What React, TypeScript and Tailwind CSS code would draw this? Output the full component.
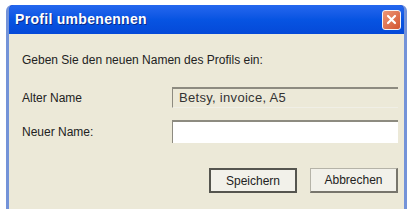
export default function App() {
  return (
    <div className="w-[412px] h-[209px] bg-white pl-[6px] pr-[5px] pt-[5px] overflow-hidden" style={{ fontFamily: '"Liberation Sans", Arial, sans-serif' }}>
      <div className="h-[210px] flex flex-col rounded-t-[6px] bg-[#0a3fd6] border-x-[3px] border-[#7493d8]">
        {/* Titelleiste */}
        <div className="h-[29px] flex items-center justify-between pl-[6px] pr-[3px] bg-gradient-to-b from-[#2467ee] via-[#0754e2] to-[#0549d8] rounded-t-[5px]">
          <span className="text-white font-bold text-[14px] tracking-[0.3px] [text-shadow:1px_1px_0_#0a2a8a]">Profil umbenennen</span>
          <div className="w-[19px] h-[20px] rounded-[3px] border border-[#f4f4f4] bg-gradient-to-br from-[#ec9676] to-[#d2532e] flex items-center justify-center">
            <svg width="11" height="11" viewBox="0 0 11 11">
              <path d="M2 2 L9 9 M9 2 L2 9" stroke="white" strokeWidth="2.2" strokeLinecap="round" />
            </svg>
          </div>
        </div>

        {/* Inhalt */}
        <div className="flex-1 bg-[#ece9d8] text-[12px] text-[#222] pl-[13px] pr-[6px] pt-[17px]">
          <div>Geben Sie den neuen Namen des Profils ein:</div>

          <div className="mt-[18px] flex items-center">
            <div className="w-[150px]">Alter Name</div>
            <div className="flex-1 h-[21px] border-t-2 border-[#8d8b80] border-l border-b border-b-[#f0efe6] bg-[#ece9d8] flex items-center px-[6px] text-[13px] tracking-[0.3px] text-[#333]">
              Betsy, invoice, A5
            </div>
          </div>

          <div className="mt-[12px] flex items-center">
            <div className="w-[150px]">Neuer Name:</div>
            <div className="flex-1 h-[23px] border-t-2 border-l border-[#8d8b80] bg-white" />
          </div>

          <div className="mt-[25px] flex justify-end gap-[13px]">
            <div className="w-[88px] h-[25px] border-2 border-[#55554f] bg-[#f2f1ea] flex items-center justify-center">Speichern</div>
            <div className="w-[88px] h-[25px] border border-[#b5b3a8] border-r-2 border-b-2 border-r-[#77756c] border-b-[#77756c] bg-[#f2f1ea] flex items-center justify-center">Abbrechen</div>
          </div>
        </div>
      </div>
    </div>
  );
}
